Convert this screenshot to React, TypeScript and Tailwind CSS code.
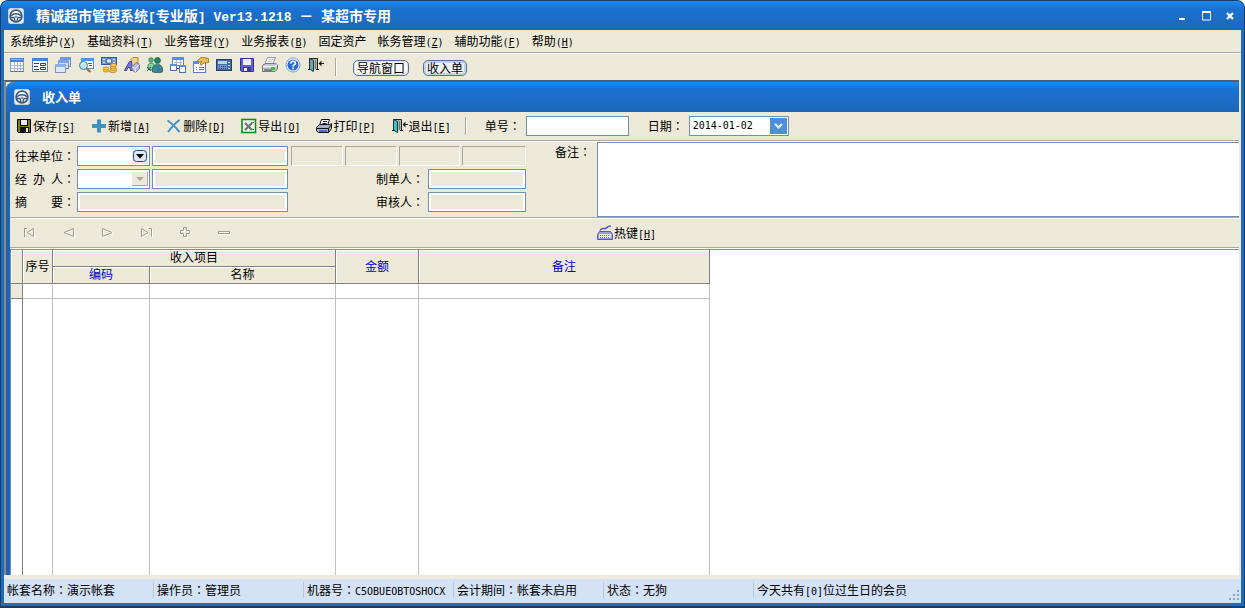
import type { ReactNode } from "react";

// Half-width characters sit on a 6px cell, half of the 12px Chinese cell
function Ascii({ children }: { children: ReactNode }) {
  return <span className="whitespace-pre font-['DejaVu_Sans_Mono',monospace] text-[10px] leading-none">{children}</span>;
}

function Hotkey({ k, round }: { k: string; round?: boolean }) {
  return (
    <Ascii>
      {round ? "(" : "["}
      <span className="underline underline-offset-1">{k}</span>
      {round ? ")" : "]"}
    </Ascii>
  );
}

function Colon() {
  return <span className="font-['Noto_Sans_CJK_TC',sans-serif] leading-none" lang="zh-TW">：</span>;
}

function Icon({ children, size = 16 }: { children: ReactNode; size?: number }) {
  return (
    <svg width={size} height={size} viewBox="0 0 16 16" className="shrink-0" aria-hidden="true">
      {children}
    </svg>
  );
}

function WheelIcon() {
  return (
    <Icon>
      <rect x="0.5" y="0.5" width="15" height="15" rx="2" fill="#e6ecf2" stroke="#c3cfdb" />
      <circle cx="8" cy="8" r="5.900" fill="#fff" stroke="#3d5a7c" strokeWidth="1.700" />
      <path d="M2.500 8Q8 3.500 13.500 8" fill="none" stroke="#3d5a7c" strokeWidth="1.500" />
      <path d="M2.500 9.500h3.500l1.200 4M13.500 9.500H10l-1.200 4" fill="none" stroke="#3d5a7c" strokeWidth="1.300" />
      <circle cx="8" cy="8.800" r="1.400" fill="#7d96b2" />
    </Icon>
  );
}

function SheetIcon() {
  return (
    <Icon>
      <rect x="1.500" y="1.500" width="13" height="13" fill="#fff" stroke="#7ba0e0" />
      <rect x="1" y="1" width="14" height="4" fill="#4a80dc" />
      <rect x="2" y="2" width="12" height="1" fill="#8db2f2" />
      <path d="M2 8.500h12M2 11.500h12M5.500 5v9M8.500 5v9M11.500 5v9" stroke="#a9b8d8" />
      <path d="M1 14.500h14" stroke="#5577b8" />
    </Icon>
  );
}

function FormIcon() {
  return (
    <Icon>
      <rect x="0.500" y="1.500" width="15" height="13" fill="#f4f7fd" stroke="#5d86cc" />
      <rect x="0" y="1" width="16" height="3" fill="#4a80dc" />
      <path d="M2 6.500h5M2 9.500h4M2 12.500h5" stroke="#333f60" />
      <path d="M8.500 6.500h5v2h-5zM8.500 10.500h5v2h-5z" fill="#fff" stroke="#333f60" />
    </Icon>
  );
}

function WindowsIcon() {
  return (
    <Icon>
      <rect x="5.500" y="0.500" width="10" height="9" fill="#dce7fa" stroke="#6a8dcc" />
      <rect x="5" y="0" width="11" height="3" fill="#6f9ae2" />
      <rect x="3.500" y="3.500" width="10" height="8" fill="#cfdef7" stroke="#6a8dcc" />
      <rect x="3" y="3" width="11" height="3" fill="#7ba4e6" />
      <rect x="0.500" y="7.500" width="10" height="8" fill="#dfe7f5" stroke="#7f94b8" />
      <rect x="0" y="7" width="11" height="3" fill="#8aaee8" />
    </Icon>
  );
}

function SearchFormIcon() {
  return (
    <Icon>
      <rect x="3.500" y="1.500" width="12" height="10" fill="#fff" stroke="#5d86cc" />
      <rect x="3" y="1" width="13" height="3" fill="#5b8ee2" />
      <path d="M10 6.500h4M11 8.500h3" stroke="#555f7d" />
      <circle cx="5.500" cy="8.500" r="4" fill="#b9e5ee" stroke="#53788b" />
      <path d="M3.500 7.500q1-2 3-1.500" fill="none" stroke="#fff" />
      <path d="M8.500 11.500l4 3.500" stroke="#9c6c30" strokeWidth="2.200" />
    </Icon>
  );
}

function MoneyIcon() {
  return (
    <Icon>
      <rect x="0.500" y="0.500" width="15" height="7" fill="#6f99dd" stroke="#365ba5" />
      <ellipse cx="8" cy="4" rx="3" ry="2.500" fill="#dce8fb" stroke="#365ba5" />
      <path d="M2 2.500h2M12 2.500h2M2 5.500h2M12 5.500h2" stroke="#dce8fb" />
      <g fill="#ffd45d" stroke="#b27c16" strokeWidth="0.800">
        <ellipse cx="12" cy="14" rx="3.500" ry="1.500" />
        <ellipse cx="12.500" cy="12" rx="3" ry="1.500" />
        <ellipse cx="12" cy="10" rx="3" ry="1.500" />
        <ellipse cx="12.500" cy="8" rx="3" ry="1.500" />
        <ellipse cx="5" cy="13.500" rx="3" ry="1.500" />
        <ellipse cx="5" cy="11.500" rx="3" ry="1.500" />
      </g>
    </Icon>
  );
}

function BlocksIcon() {
  return (
    <Icon>
      <path d="M7 2.500l2-2h5v7l-2 2H7z" fill="#f4d27f" stroke="#a9884a" />
      <path d="M0.500 13.500l5-9h2l1 9H6.500l-.5-3H4l-1.500 3z" fill="#7477df" stroke="#4241a5" />
      <path d="M8 10l4-4.500 3.500 2v4l-4 4L8 13z" fill="#b4bbdd" stroke="#6f75ab" />
      <path d="M8 10l3.500 1.500 4-4M11.500 11.500v4" fill="none" stroke="#e6e8f8" />
    </Icon>
  );
}

function PeopleIcon() {
  return (
    <Icon>
      <circle cx="4" cy="3" r="2.300" fill="#55b477" stroke="#267446" strokeWidth="0.700" />
      <path d="M1 12q-1-6 3-6 3 0 4 3l-3 4z" fill="#8bd09c" stroke="#267446" strokeWidth="0.700" />
      <circle cx="10.500" cy="3.500" r="3" fill="#2b806c" stroke="#145543" strokeWidth="0.700" />
      <path d="M5.500 15q-1-7.500 5-7.500t5 7.500q-5 1.500-10 0z" fill="#3b8f85" stroke="#145543" strokeWidth="0.700" />
      <path d="M9 9q4-.5 5.500 5-2 1.500-4.500 1.200z" fill="#3679b8" />
      <path d="M0 10l4 4M4 10l-4 4" stroke="#1b5c7a" />
    </Icon>
  );
}

function RelationIcon() {
  return (
    <Icon>
      <rect x="2.500" y="0.500" width="11" height="8" fill="#fff" stroke="#5d86cc" />
      <rect x="2" y="0" width="12" height="3" fill="#5b8ee2" />
      <path d="M4 5.500h8M6.500 3v5M10.500 3v5" stroke="#a9b8d8" />
      <rect x="0.500" y="7.500" width="6" height="6" fill="#f5f8ff" stroke="#536f9f" />
      <rect x="9.500" y="8.500" width="6" height="7" fill="#f5f8ff" stroke="#536f9f" />
      <path d="M0 8h7M9 9h7" stroke="#5b8ee2" strokeWidth="2" />
      <path d="M7 11.500h2" stroke="#333f60" />
    </Icon>
  );
}

function HandFormIcon() {
  return (
    <Icon>
      <rect x="0.500" y="4.500" width="12" height="11" fill="#fff" stroke="#5d7bb5" />
      <rect x="0" y="4" width="6" height="3" fill="#5b8ee2" />
      <path d="M3 10.500h1M3 12.500h1M6 10.500h5M6 12.500h5" stroke="#667295" />
      <path d="M4 4l4-3.500h3l4.500 1v4L11 6 8 8.500 7 7l2-2.500-2 1z" fill="#e9bd58" stroke="#936c22" strokeWidth="0.800" />
    </Icon>
  );
}

function TillIcon() {
  return (
    <Icon>
      <rect x="0.500" y="2.500" width="15" height="11" fill="#456eab" stroke="#253f70" />
      <rect x="2" y="4" width="9" height="3" fill="#b9d3ee" />
      <rect x="2" y="8" width="9" height="4" fill="#7896c0" />
      <path d="M3 9.500h7M3 11.500h7" stroke="#27487b" strokeDasharray="1 1" />
      <path d="M12 5.500h2M12 8.500h2M12 11.500h2" stroke="#c7daf0" />
    </Icon>
  );
}

function FloppyIcon() {
  return (
    <Icon>
      <path d="M1.500 1.500h13v13h-12l-1-1z" fill="#655fd0" stroke="#34318c" />
      <rect x="4" y="2" width="8" height="6" fill="#eef1ff" />
      <rect x="4" y="10" width="8" height="4" fill="#3a3797" />
      <rect x="5" y="11" width="3" height="3" fill="#f2f2ff" />
    </Icon>
  );
}

function PrinterIcon() {
  return (
    <Icon>
      <path d="M5.500 0.500h8L11 7H3z" fill="#fff" stroke="#9299a8" />
      <path d="M6.500 2.500h5M5.500 4.500h5" stroke="#c0c5ce" />
      <path d="M0.500 8.500l3-2h9l3 1v4.500L13 14.500H0.500z" fill="#c3c8cf" stroke="#727780" />
      <path d="M1 9.500h11.500l3-2" fill="none" stroke="#fff" />
      <rect x="2" y="12" width="8" height="2" fill="#7b828e" />
      <rect x="9" y="10" width="4" height="3" fill="#3bc344" />
    </Icon>
  );
}

function HelpIcon() {
  return (
    <Icon>
      <circle cx="8" cy="8" r="7" fill="#fff" stroke="#7ba0dc" />
      <circle cx="8" cy="8" r="5.600" fill="#2c6cd6" />
      <path d="M5.800 6.500q0-2.300 2.300-2.300t2.300 2q0 1-1.200 1.700T8 9.500" fill="none" stroke="#fff" strokeWidth="1.600" />
      <rect x="7.200" y="10.500" width="1.700" height="1.700" fill="#fff" />
    </Icon>
  );
}

function DoorIcon({ bright }: { bright?: boolean }) {
  return (
    <Icon>
      <path d="M1.500 12.500V1.500h8v11" fill="#b6b6a6" stroke="#222" />
      <path d="M0 12.500h2M8 12.500h3" stroke="#222" />
      <path d="M1.500 1.500l4 2v11l-4-2.500z" fill={bright ? "#3cc4c4" : "#6fa5a8"} stroke="#16383c" />
      <path d="M7.500 3v9" stroke="#77776e" />
      <path d="M11 6.500h5" stroke="#222" />
      <path d="M10.500 6.500l3-3v6z" fill="#222" />
    </Icon>
  );
}

function SaveIcon() {
  return (
    <Icon>
      <path d="M1.500 1.500h13v13h-12l-1-1z" fill="#7c7c1e" stroke="#000" />
      <rect x="4.500" y="1.500" width="7" height="6" fill="#f0eee2" stroke="#000" />
      <rect x="4" y="9" width="9" height="5" fill="#111" />
      <rect x="10" y="10" width="2" height="4" fill="#ece9d8" />
    </Icon>
  );
}

function AddIcon() {
  return (
    <Icon>
      <path d="M8 1.500v13M1 8h14" stroke="#3e93bd" strokeWidth="4" />
    </Icon>
  );
}

function DeleteIcon() {
  return (
    <Icon>
      <path d="M1.500 2.500Q7 6 13.500 14M13.500 2Q8 6 2 14" fill="none" stroke="#3e93c4" strokeWidth="2" />
    </Icon>
  );
}

function ExcelIcon() {
  return (
    <Icon>
      <rect x="1" y="1.500" width="13.500" height="13" fill="#f7fbf5" stroke="#158a1d" strokeWidth="1.600" />
      <path d="M4 5l7 7M11 5l-7 7" stroke="#6d7a70" strokeWidth="2.400" />
      <path d="M9 11.500h4M10 4.500h3" stroke="#6d7a70" />
    </Icon>
  );
}

function PrintIcon() {
  return (
    <Icon>
      <path d="M5.500 1.500h8l-2 6h-8z" fill="#fff" stroke="#111" />
      <path d="M7 3.500h4M6.500 5.500h4" stroke="#111" />
      <path d="M0.500 9.500l3-3h10l2-1v5l-3 4h-10l-2-1.500z" fill="#a8b0cc" stroke="#111" />
      <path d="M1 10.500h11.500l3-4M12.500 10.500v4" fill="none" stroke="#111" />
      <rect x="3" y="12" width="8" height="2" fill="#4f6fd0" />
    </Icon>
  );
}

function KeyboardIcon() {
  return (
    <Icon>
      <path d="M3 5.500q1-2.500 3.500-2t3.500-1 4-1.500" fill="none" stroke="#5454cc" strokeWidth="1.500" />
      <path d="M2.500 6.500h11l2 3v5h-15v-5z" fill="#9a9ce8" stroke="#5454cc" />
      <rect x="2" y="9" width="12" height="4" fill="#e6e6d2" />
      <path d="M3 10.500h10M3 12.500h10" stroke="#6b6ba8" strokeDasharray="1 1" />
    </Icon>
  );
}

const navShapes = [
  { label: "首记录", d: "M3.500 3v9M3.500 3.500h2M12.500 3.500v8L6 7.500z" },
  { label: "上一条", d: "M13.500 3.500v8L4 7.500z" },
  { label: "下一条", d: "M3.500 3.500v8L13 7.500z" },
  { label: "末记录", d: "M3.500 3.500v8L10 7.500zM11 3.500h2.500v8" },
  { label: "插入", d: "M6.500 2.500h3v3h3v3h-3v3h-3v-3h-3v-3h3z" },
  { label: "删行", d: "M2.500 6.500h11v2h-11z" },
];

const menus = [
  { text: "系统维护", k: "X" },
  { text: "基础资料", k: "T" },
  { text: "业务管理", k: "Y" },
  { text: "业务报表", k: "B" },
  { text: "固定资产", k: "" },
  { text: "帐务管理", k: "Z" },
  { text: "辅助功能", k: "F" },
  { text: "帮助", k: "H" },
];

const tools = [
  { label: "表格", icon: <SheetIcon /> },
  { label: "表单", icon: <FormIcon /> },
  { label: "窗口", icon: <WindowsIcon /> },
  { label: "查询", icon: <SearchFormIcon /> },
  { label: "资金", icon: <MoneyIcon /> },
  { label: "商品", icon: <BlocksIcon /> },
  { label: "会员", icon: <PeopleIcon /> },
  { label: "关系", icon: <RelationIcon /> },
  { label: "属性", icon: <HandFormIcon /> },
  { label: "收银", icon: <TillIcon /> },
  { label: "保存", icon: <FloppyIcon /> },
  { label: "打印", icon: <PrinterIcon /> },
  { label: "帮助", icon: <HelpIcon /> },
  { label: "退出", icon: <DoorIcon /> },
];

const actions = [
  { text: "保存", k: "S", icon: <SaveIcon /> },
  { text: "新增", k: "A", icon: <AddIcon /> },
  { text: "删除", k: "D", icon: <DeleteIcon /> },
  { text: "导出", k: "O", icon: <ExcelIcon /> },
  { text: "打印", k: "P", icon: <PrintIcon /> },
  { text: "退出", k: "E", icon: <DoorIcon bright /> },
];

const titleBar = "flex h-[30px] shrink-0 items-center bg-linear-to-b from-[#1c8aee] via-[#1a71d2] via-25% to-[#1d67b8] font-bold text-white";
const bar = "shrink-0 border-b border-[#aca899] shadow-[0_1px_0_#fff]";
const divider = "border-l border-[#aca899] shadow-[1px_0_0_#fff]";
const field = "h-5 border border-[#6f90b3] bg-white outline-none disabled:opacity-100";
const readOnly = "h-5 border border-[#6f90b3] bg-[#ece9d8] shadow-[inset_0_0_0_2px_#fff] outline-none";
const panel = "h-5 border border-t-[#aca899] border-l-[#aca899] border-r-white border-b-white";
const th = "border-r border-b border-[#808080] bg-[#ece9d8] px-0 pt-0 pb-[2px] text-center font-normal shadow-[inset_1px_1px_0_#fff]";
const td = "border-r border-b border-[#c0c0c0] p-0";

function FieldLabel({ id, chars }: { id: string; chars: string[] }) {
  return (
    <label htmlFor={id} className="flex w-[62px] shrink-0 items-center">
      <span className="flex w-12 justify-between">
        {chars.map((c) => (
          <span key={c}>{c}</span>
        ))}
      </span>
      <Colon />
    </label>
  );
}

function Combo({ id, disabled }: { id: string; disabled?: boolean }) {
  return (
    <div className="relative mr-[2px] flex w-[73px] shrink-0">
      <select id={id} disabled={disabled} className={`${field} w-full appearance-none px-1`}>
        <option></option>
      </select>
      <svg width="16" height="16" viewBox="0 0 16 16" className="pointer-events-none absolute top-[2px] right-[2px]" aria-hidden="true">
        {disabled ? (
          <>
            <path d="M0 1h16v14H0z" fill="#ece9d8" />
            <path d="M0 14.500h15.500V1" fill="none" stroke="#aca899" />
            <path d="M4 6h8L8 10z" fill="#aca899" />
          </>
        ) : (
          <>
            <path d="M0 0h16v16H0z" fill="#e6ebf4" />
            <rect x="1.500" y="2.500" width="13" height="11" rx="3" fill="#dde6f5" stroke="#34496e" />
            <path d="M4 6h8L8 10.500z" fill="#000" />
          </>
        )}
      </svg>
    </div>
  );
}

function StatusItem({ children, last }: { children: ReactNode; last?: boolean }) {
  return (
    <div className={`flex h-4 items-center whitespace-nowrap px-[3px] ${last ? "flex-1" : "w-[150px] shrink-0 border-r border-[#b5c7de]"}`}>
      <span>{children}</span>
    </div>
  );
}

function IncomeForm() {
  return (
    <section className="flex min-h-0 flex-1 flex-col rounded-tl-lg border-l-4 border-[#1f62b5] bg-[#ece9d8]">
      <div className={`${titleBar} -ml-1 gap-3 rounded-tl-lg pl-2 text-[13px]`}>
        <WheelIcon />
        <h2>收入单</h2>
      </div>

      <div className={`${bar} mb-px flex h-[29px] items-center pl-[6px]`}>
        <div className="flex gap-4">
          {actions.map((a) => (
            <button key={a.k} type="button" className="flex items-center gap-px">
              {a.icon}
              <span>
                {a.text}
                <Hotkey k={a.k} />
              </span>
            </button>
          ))}
        </div>
        <div className={`${divider} ml-[14px] h-[18px]`} />
        <label htmlFor="billNo" className="ml-[19px] w-[41px]">
          单号
          <Colon />
        </label>
        <input id="billNo" className={`${field} w-[103px] px-1`} />
        <label htmlFor="billDate" className="ml-[19px] w-[41px]">
          日期
          <Colon />
        </label>
        <div className="relative flex w-[100px]">
          <select id="billDate" className={`${field} w-full appearance-none px-[3px] font-['DejaVu_Sans_Mono',monospace] text-[10px]`}>
            <option>2014-01-02</option>
          </select>
          <svg width="17" height="16" viewBox="0 0 17 16" className="pointer-events-none absolute top-[2px] right-[2px]" aria-hidden="true">
            <path d="M0 0h17v16H0z" fill="#4f8edb" />
            <path d="M5 6l3.500 3.500L12 6" fill="none" stroke="#dff4fb" strokeWidth="2.200" />
          </svg>
        </div>
      </div>

      <div className={`${bar} mb-px flex h-[76px] pl-[5px]`}>
        <div className="flex w-[511px] shrink-0 flex-col gap-[3px] pt-1">
          <div className="flex items-center">
            <FieldLabel id="partner" chars={["往", "来", "单", "位"]} />
            <Combo id="partner" />
            <input readOnly aria-label="往来单位名称" className={`${readOnly} w-[136px]`} />
            <div className="ml-[3px] flex gap-[2px]">
              <div className={`${panel} w-[52px]`} />
              <div className={`${panel} w-[52px]`} />
              <div className={`${panel} w-[61px]`} />
              <div className={`${panel} w-16`} />
            </div>
          </div>
          <div className="flex items-center">
            <FieldLabel id="handler" chars={["经", "办", "人"]} />
            <Combo id="handler" disabled />
            <input readOnly aria-label="经办人姓名" className={`${readOnly} w-[136px]`} />
            <label htmlFor="maker" className="ml-auto w-[52px]">
              制单人
              <Colon />
            </label>
            <input id="maker" readOnly className={`${readOnly} w-[98px]`} />
          </div>
          <div className="flex items-center">
            <FieldLabel id="summary" chars={["摘", "要"]} />
            <input id="summary" readOnly className={`${readOnly} w-[211px]`} />
            <label htmlFor="auditor" className="ml-auto w-[52px]">
              审核人
              <Colon />
            </label>
            <input id="auditor" readOnly className={`${readOnly} w-[98px]`} />
          </div>
        </div>
        <label htmlFor="remark" className="ml-[29px] w-[42px] shrink-0 pt-[2px]">
          备注
          <Colon />
        </label>
        <textarea id="remark" className="h-[75px] flex-1 resize-none border border-r-0 border-[#6f90b3] bg-white p-1 outline-none" />
      </div>

      <div className={`${bar} mb-px flex h-[29px] items-center pl-[11px]`}>
        <div className="flex gap-[23px]">
          {navShapes.map((n) => (
            <button key={n.label} type="button" disabled aria-label={n.label}>
              <Icon>
                <path d={n.d} transform="translate(1 1)" fill="none" stroke="#fff" />
                <path d={n.d} fill="none" stroke="#a09c8c" />
              </Icon>
            </button>
          ))}
        </div>
        <button type="button" className="ml-[365px] flex items-center gap-px">
          <KeyboardIcon />
          <span>
            热键
            <Hotkey k="H" />
          </span>
        </button>
      </div>

      <div className="min-h-0 flex-1 border-t border-l border-[#6f90b3] bg-white">
        <table className="h-full w-[699px] table-fixed border-separate border-spacing-0 leading-[14px]">
          <colgroup>
            <col className="w-3" />
            <col className="w-[30px]" />
            <col className="w-[97px]" />
            <col className="w-[186px]" />
            <col className="w-[83px]" />
            <col className="w-[291px]" />
          </colgroup>
          <thead>
            <tr className="h-[17px]">
              <th rowSpan={2} className={th}></th>
              <th rowSpan={2} className={th}>序号</th>
              <th colSpan={2} className={th}>收入项目</th>
              <th rowSpan={2} className={`${th} text-[#0000d0]`}>金额</th>
              <th rowSpan={2} className={`${th} text-[#0000d0]`}>备注</th>
            </tr>
            <tr className="h-[17px]">
              <th className={`${th} text-[#0000d0]`}>编码</th>
              <th className={th}>名称</th>
            </tr>
          </thead>
          <tbody>
            <tr className="h-[15px]">
              <td className="border-r border-b border-[#808080] bg-[#ece9d8] p-0"></td>
              <td className={td}></td>
              <td className={td}></td>
              <td className={td}></td>
              <td className={td}></td>
              <td className={td}></td>
            </tr>
            <tr>
              <td className="border-r border-[#808080] p-0"></td>
              <td className="border-r border-[#c0c0c0] p-0"></td>
              <td className="border-r border-[#c0c0c0] p-0"></td>
              <td className="border-r border-[#c0c0c0] p-0"></td>
              <td className="border-r border-[#c0c0c0] p-0"></td>
              <td className="border-r border-[#c0c0c0] p-0"></td>
            </tr>
          </tbody>
        </table>
      </div>
    </section>
  );
}

export default function App() {
  return (
    <div className="flex h-screen min-h-[400px] flex-col overflow-hidden rounded-t-lg border-t border-r border-b-2 border-l border-[#123f70] bg-[#1f6cb9] font-['Noto_Sans_CJK_SC',sans-serif] text-xs leading-4 text-black">
      <header className={`${titleBar} -mb-px gap-3 pr-[6px] pl-[7px] text-sm`}>
        <WheelIcon />
        <h1 className="flex-1 whitespace-pre">
          精诚超市管理系统
          <span className="font-['Liberation_Mono',monospace] text-[13px]">[</span>
          专业版
          <span className="font-['Liberation_Mono',monospace] text-[13px]">] Ver13.1218 </span>
          －
          <span className="font-['Liberation_Mono',monospace] text-[13px]"> </span>
          某超市专用
        </h1>
        <div className="flex gap-2">
          <button type="button" aria-label="最小化">
            <Icon>
              <path d="M5 11h6" stroke="#fff" strokeWidth="2" />
            </Icon>
          </button>
          <button type="button" aria-label="最大化">
            <Icon>
              <path d="M4.500 4v8h8V4M4 4h9" fill="none" stroke="#fff" />
              <path d="M4 4h9" stroke="#fff" strokeWidth="2" />
            </Icon>
          </button>
          <button type="button" aria-label="关闭">
            <Icon>
              <path d="M5 5l6 6M11 5l-6 6" stroke="#fff" strokeWidth="2.200" />
            </Icon>
          </button>
        </div>
      </header>

      <div className="mx-[3px] mb-[3px] flex min-h-0 flex-1 flex-col bg-[#ece9d8]">
        <nav className={`${bar} mb-px flex h-[23px] items-center gap-[11px] pl-[6px]`}>
          {menus.map((m) => (
            <button key={m.text} type="button" className="whitespace-nowrap">
              {m.text}
              {m.k && <Hotkey k={m.k} round />}
            </button>
          ))}
        </nav>

        <div className="flex h-[26px] shrink-0 items-center pl-[5px]">
          <div className="flex gap-[7px] pb-1">
            {tools.map((t) => (
              <button key={t.label} type="button" aria-label={t.label}>
                {t.icon}
              </button>
            ))}
          </div>
          <div className={`${divider} mr-[17px] ml-[11px] h-[18px]`} />
          <div className="flex gap-[14px] pt-[2px]">
            <button type="button" className="h-4 rounded-[5px] border border-[#5a6f90] bg-[#f6f7f4] px-[3px] leading-[14px] shadow-[inset_0_0_0_1px_#dde4ee]">
              导航窗口
            </button>
            <button type="button" className="h-4 rounded-[5px] border border-[#5a6f90] bg-[#eef1f5] px-[3px] leading-[14px] shadow-[inset_0_0_0_2px_#c3d3ea]">
              收入单
            </button>
          </div>
        </div>

        <main className="mr-[2px] flex min-h-0 flex-1 flex-col border-t-2 border-l-2 border-t-[#55606a] border-l-[#8b8a80]">
          <IncomeForm />
        </main>

        <footer className="flex h-7 shrink-0 items-center border-t-4 border-[#eceadf] bg-[#d3e2f5] pb-[2px]">
          <StatusItem>帐套名称<Colon />演示帐套</StatusItem>
          <StatusItem>操作员<Colon />管理员</StatusItem>
          <StatusItem>
            机器号<Colon />
            <Ascii>C5OBUEOBTOSHOCX</Ascii>
          </StatusItem>
          <StatusItem>会计期间<Colon />帐套未启用</StatusItem>
          <StatusItem>状态<Colon />无狗</StatusItem>
          <StatusItem last>
            今天共有<Ascii>[0]</Ascii>位过生日的会员
          </StatusItem>
          <svg width="12" height="12" viewBox="0 0 12 12" className="self-end" aria-hidden="true">
            <path d="M8 1h2v2H8zM4 5h2v2H4zM8 5h2v2H8zM0 9h2v2H0zM4 9h2v2H4zM8 9h2v2H8z" fill="#8fa3c4" />
          </svg>
        </footer>
      </div>
    </div>
  );
}
